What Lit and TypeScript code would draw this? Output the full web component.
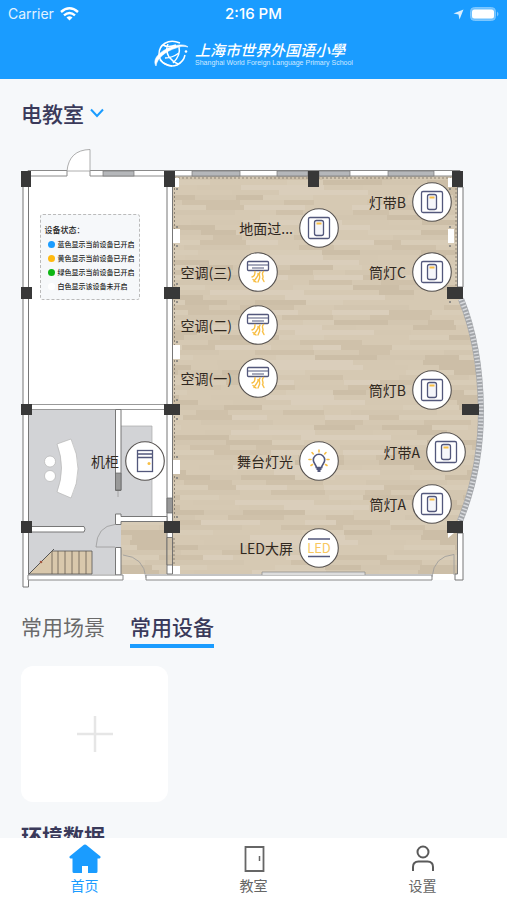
import { LitElement, html, svg, css } from "lit";
import { customElement, property, state } from "lit/decorators.js";
import { classMap } from "lit/directives/class-map.js";

type IconName = "switch" | "ac" | "bulb" | "led" | "cabinet";

interface Device {
  label: string;
  icon: IconName;
  x: number;
  y: number;
}

/* Plan drawing units: the visible area of the floor plan. */
const PLAN = { x: 21, y: 148, w: 465, h: 442 };

const DEVICES: Device[] = [
  { label: "灯带B", icon: "switch", x: 432, y: 202 },
  { label: "地面过...", icon: "switch", x: 319, y: 228 },
  { label: "空调(三)", icon: "ac", x: 258, y: 272 },
  { label: "筒灯C", icon: "switch", x: 432, y: 272 },
  { label: "空调(二)", icon: "ac", x: 258, y: 325 },
  { label: "空调(一)", icon: "ac", x: 258, y: 378 },
  { label: "筒灯B", icon: "switch", x: 432, y: 390 },
  { label: "灯带A", icon: "switch", x: 446, y: 452 },
  { label: "机柜", icon: "cabinet", x: 145, y: 461 },
  { label: "舞台灯光", icon: "bulb", x: 319, y: 461 },
  { label: "筒灯A", icon: "switch", x: 432, y: 504 },
  { label: "LED大屏", icon: "led", x: 319, y: 548 },
];

const LEGEND = [
  { tone: "blue", text: "蓝色显示当前设备已开启" },
  { tone: "amber", text: "黄色显示当前设备已开启" },
  { tone: "green", text: "绿色显示当前设备已开启" },
  { tone: "blank", text: "白色显示该设备未开启" },
];

const INK = "#53587c";
const GOLD = "#f8bf45";

const ICONS = {
  switch: svg`
    <rect x="9.5" y="9.5" width="21" height="21" rx="1.5" fill="none" stroke=${INK} stroke-width="1.3"/>
    <rect x="15.5" y="12.5" width="9" height="15" rx="2" fill="#f5f6fa" stroke=${INK} stroke-width="1.3"/>
    <path d="M17.5 15.5h5" stroke=${GOLD} stroke-width="2"/>`,
  ac: svg`
    <rect x="9.5" y="9.5" width="21" height="9" rx="1" fill="#fff" stroke=${INK} stroke-width="1.3"/>
    <path d="M9.5 13h21M14 16h12" stroke=${INK} stroke-width="1.1" fill="none"/>
    <path d="M17 19.5c0 4-1 4.5-3 5.5M20 21.500c1 3-3 5-4 8M22 20c-2 3 1 4.500-1 7.500l-1 2.500M25.500 19.500c-3 2.500 1 4.500-1 7l1.500 3M15 27.500l3 2.500" stroke=${GOLD} stroke-width="1.4" fill="none" stroke-linecap="round"/>`,
  bulb: svg`
    <path d="M17.3 26.5c0-3-3-4.2-3-7.5a5.7 5.7 0 0 1 11.4 0c0 3.3-3 4.5-3 7.5z" fill="#fff" stroke=${INK} stroke-width="1.6"/>
    <path d="M17.5 28h5M18.500 30h3" stroke=${INK} stroke-width="2"/>
    <path d="M20 9v2M13 11.500l1.300 1.500M27 11.500L25.700 13M10 18.500h2M28 18.500h2M12 24.500l1.500-1M28 24.500l-1.500-1" stroke=${GOLD} stroke-width="1.6" stroke-linecap="round"/>`,
  led: svg`
    <path d="M9 11h22M9 28.500h22" stroke=${INK} stroke-width="1.6"/>
    <text x="20" y="24.500" text-anchor="middle" class="led">LED</text>`,
  cabinet: svg`
    <rect x="12.5" y="9.5" width="15" height="21" fill="#fff" stroke=${INK} stroke-width="1.3"/>
    <path d="M12.5 13h15M12.5 16.500h15" stroke=${INK} stroke-width="1.3"/>
    <circle cx="24" cy="22.500" r="1.500" fill=${GOLD}/>`,
};

/* Staggered planks covering the wooden floor. */
const PLANK_TONES = ["#d6c9b3", "#cfc1aa", "#dacebb", "#d3c6b0", "#d8ccb7", "#ccbea7", "#d5c8b2"];
const PLANKS = Array.from({ length: 84 }, (_, row) => {
  const cells: { x: number; y: number; w: number; tone: string }[] = [];
  let x = -((row * 37) % 50);
  let i = 0;
  while (x < 500) {
    const w = 26 + ((row * 17 + i * 23) % 37);
    cells.push({ x, y: row * 5, w, tone: PLANK_TONES[(row * row + i * i * 2 + row * i * 3) % 7] });
    x += w;
    i++;
  }
  return cells;
}).flat();

const COLUMNS = [
  [21, 171, 10, 16], [164, 171, 11, 16], [308, 171, 11, 16], [452, 171, 11, 16],
  [21, 287, 11, 12], [164, 287, 16, 12], [447, 287, 16, 12],
  [21, 404, 11, 11], [164, 404, 16, 11], [462, 404, 17, 11],
  [21, 521, 11, 12], [164, 521, 16, 12], [447, 521, 16, 12],
];

const WINDOWS = [[103, 31], [192, 48], [277, 31], [319, 31], [388, 46]];
const STAIRS = [52, 58, 65, 72, 79, 86];

@customElement("device-pin")
export class DevicePin extends LitElement {
  @property() label = "";
  @property() icon: IconName = "switch";

  static styles = css`
    :host {
      display: block;
    }
    .pin {
      display: flex;
      align-items: center;
      gap: 6px;
      padding: 0;
      border: 0;
      background: none;
      color: #30281f;
      font: 14px/20px "Noto Sans CJK SC", sans-serif;
      white-space: nowrap;
      cursor: pointer;
    }
    .disc {
      width: 40px;
      height: 40px;
      display: block;
    }
    .led {
      font: 13px "Noto Sans CJK SC", sans-serif;
      fill: #f8c860;
    }
  `;

  render() {
    return html`<button class="pin" type="button">
      <span>${this.label}</span>
      <svg class="disc" viewBox="0 0 40 40" aria-hidden="true">
        <circle cx="20" cy="20" r="19.3" fill="#fff" stroke="#55514f" stroke-width="1.1" />
        ${ICONS[this.icon]}
      </svg>
    </button>`;
  }
}

@customElement("floor-plan")
export class FloorPlan extends LitElement {
  static styles = css`
    :host {
      display: block;
      position: relative;
    }
    .drawing {
      display: block;
      width: 100%;
      height: auto;
    }
    .pin {
      position: absolute;
      transform: translateY(-50%);
    }
    .legend {
      position: absolute;
      left: 4%;
      top: 15%;
      box-sizing: border-box;
      width: 100px;
      padding: 8px 4px 6px;
      border: 1px dashed #bbb;
      border-radius: 3px;
      background: #f6f8fa;
      color: #222;
      font: 500 7px/14px "Noto Sans CJK SC", sans-serif;
      white-space: nowrap;
    }
    .legend h3 {
      margin: 0;
      font-size: 8px;
      font-weight: 500;
      line-height: 14px;
    }
    .legend ul {
      margin: 0;
      padding: 0 0 0 3px;
      list-style: none;
    }
    .legend li {
      display: flex;
      align-items: center;
      gap: 3px;
    }
    .dot {
      width: 7px;
      height: 7px;
      border-radius: 50%;
    }
    .blue { background: #1a9cff; }
    .amber { background: #ffb90f; }
    .green { background: #0db614; }
    .blank { background: #fff; }
  `;

  private drawing() {
    return html`<svg class="drawing" viewBox="${PLAN.x} ${PLAN.y} ${PLAN.w} ${PLAN.h}" aria-hidden="true">
      <defs>
        <pattern id="wood" y="170" width="500" height="420" patternUnits="userSpaceOnUse">
          <rect width="500" height="420" fill="#d5c8b3" />
          ${PLANKS.map((p) => svg`<rect x=${p.x} y=${p.y} width=${p.w} height="5" fill=${p.tone}/>`)}
        </pattern>
      </defs>

      <!-- floors -->
      <path d="M23 171H463V299Q480 345 481 410Q481 470 463 521V580H23z" fill="#fff" />
      <path d="M173 176H457V290L461 299Q478 345 479 410Q479 470 458 521V574H173z" fill="url(#wood)" />
      <path d="M29 410H115V574H29zM115 473H121V547H115zM121 426H152V516H121z" fill="#d2d3d6" />
      <path d="M121 522H173V574H121z" fill="url(#wood)" />
      <path d="M121 426H152V516" fill="none" stroke="#aaa" stroke-width=".7" />

      <!-- outer and inner walls -->
      <g fill="#fff" stroke="#777" stroke-width="1">
        <path d="M23 176H28.5V587H23z" />
        <path d="M28 170.5H67V176H28zM90 170.5H460V176H90z" stroke="#8a8a8a" />
        <path d="M167 176H172.5V574H167z" />
        <path d="M457.5 187H463V287H457.5zM457.5 533H463V580H455V574H457.5z" />
        <path d="M29 404.5H167V409.5H29z" stroke="#999" />
        <path d="M115.5 409.5H121V490.5H115.5z" />
        <path d="M115.5 514H121V516.5H167V521.5H121V524.5H115.5z" />
        <path d="M30 526.5H84Q86 529 84 532H30z" />
        <path d="M115.5 547.5H121V575H115.5z" />
        <path d="M28 575H123V580H28zM146 575H432V580H146z" stroke="#888" />
      </g>
      <path d="M115.5 473H121V490H115.5zM167 498H172.5V513H167z" fill="#999" stroke="#666" stroke-width=".7" />
      <path d="M167 537.5H172.5V565H167z" fill="url(#wood)" stroke="#666" stroke-width=".8" />
      ${WINDOWS.map(([x, w]) => svg`<rect x=${x} y="171" width=${w} height="5" fill="#b5b7ba" stroke="#777" stroke-width=".7"/>`)}
      <path d="M174 178H451M456 188V286M174.5 188V520M174 538V566" stroke="#8d8375" stroke-width="1" stroke-dasharray="2 2" fill="none" />

      <!-- curved glass wall -->
      <path d="M461 299Q480 345 481 410Q481 470 460 521" fill="none" stroke="#a2a5a9" stroke-width="6" />
      <path d="M461 299Q480 345 481 410Q481 470 460 521" fill="none" stroke="#d8dadd" stroke-width="5" stroke-dasharray="1.5 2" />

      <!-- wall boxes -->
      <path d="M173 178h6v9h-6zM173 229h7v14h-7zM173 345h7v14h-7zM173 460h7v14h-7zM173 566h7v8h-7zM448 229h6v14h-6zM448 178h4v9h-4zM448 533h6l-6 5z" fill="#fff" />
      <g fill="#777">
        ${[189, 227, 246, 284, 302, 342, 361, 400, 419, 457, 478, 517].map((y) => svg`<circle cx="177" cy=${y} r="1"/>`)}
        ${[189, 227, 246, 302].map((y) => svg`<circle cx="450" cy=${y} r="1"/>`)}
      </g>
      <path d="M262 575V572H365V575" fill="#ddd" stroke="#888" stroke-width=".7" />

      <!-- doors -->
      <g fill="none" stroke="#999" stroke-width=".8">
        <path d="M67 171Q69 150 90 149.5V171z" fill="#fff" />
        <path d="M96 547Q97 526 115 524.5M96 547H115" />
        <path d="M123 555Q144 557 146 578M118 491V497" />
        <path d="M432 577Q434 556 454 554.5V575" />
      </g>

      <!-- reception desk and seats -->
      <g fill="#fff" stroke="#b5b5b5" stroke-width=".7">
        <path d="M57 444L71 439Q85 469 71 498L57 492Q66 468 57 444z" />
        <circle cx="50" cy="461.5" r="5.5" />
        <circle cx="50" cy="476" r="5.5" />
      </g>

      <!-- staircase -->
      <path d="M29 574L52 551H92V574z" fill="#d9c8ac" stroke="#555" stroke-width=".8" />
      <path d="M29 574L54 549" stroke="#555" />
      <circle cx="41" cy="562" r="1.3" fill="#a0573f" />
      ${STAIRS.map((x) => svg`<path d="M${x} 551V574" stroke="#665c50" stroke-width=".8"/>`)}

      ${COLUMNS.map(([x, y, w, h]) => svg`<rect x=${x} y=${y} width=${w} height=${h} fill="#383838"/>`)}
    </svg>`;
  }

  render() {
    return html`
      ${this.drawing()}
      <section class="legend">
        <h3>设备状态：</h3>
        <ul>
          ${LEGEND.map((l) => html`<li><span class="dot ${l.tone}"></span>${l.text}</li>`)}
        </ul>
      </section>
      ${DEVICES.map((d) => {
        const right = ((PLAN.x + PLAN.w - d.x - 20) / PLAN.w) * 100;
        const top = ((d.y - PLAN.y) / PLAN.h) * 100;
        return html`<device-pin
          class="pin"
          style="right:${right}%;top:${top}%"
          label=${d.label}
          icon=${d.icon}
        ></device-pin>`;
      })}
    `;
  }
}

@customElement("app-root")
export class AppRoot extends LitElement {
  @state() private tab = 1;

  static styles = css`
    :host {
      display: flex;
      flex-direction: column;
      height: 100vh;
      background: #f6f8fa;
      color: #3a3a5a;
      font-family: "Noto Sans CJK SC", sans-serif;
    }
    header {
      background: #1a9cff;
      color: #fff;
    }
    .status {
      display: grid;
      grid-template-columns: 1fr auto 1fr;
      align-items: center;
      height: 28px;
      padding: 0 8px;
      font: 14px/20px Inter, sans-serif;
    }
    .carrier,
    .power {
      display: flex;
      align-items: center;
      gap: 6px;
    }
    .carrier {
      color: #e2f2ff;
    }
    .power {
      justify-content: flex-end;
    }
    .time {
      font-size: 15px;
      font-weight: 500;
    }
    .brand {
      display: flex;
      justify-content: center;
      align-items: center;
      gap: 6px;
      height: 51px;
    }
    .brand-text {
      display: flex;
      flex-direction: column;
    }
    .brand-cn {
      font: italic 500 15px/18px "Noto Sans CJK SC", sans-serif;
    }
    .brand-en {
      color: #cfe9ff;
      font: 7px/8px "Liberation Sans", sans-serif;
    }
    svg {
      display: block;
    }
    main {
      flex: 1;
      min-height: 0;
      overflow: auto;
      scrollbar-width: none;
      padding: 19px 21px 0;
    }
    .room {
      display: inline-grid;
      align-items: center;
    }
    .room select,
    .room svg {
      grid-area: 1 / 1;
    }
    .room svg {
      justify-self: end;
      pointer-events: none;
    }
    .room select {
      appearance: none;
      margin: 0;
      padding: 0 20px 0 0;
      border: 0;
      background: none;
      color: inherit;
      font: 500 21px/30px "Noto Sans CJK SC", sans-serif;
    }
    floor-plan {
      margin-top: 20px;
    }
    .tabs {
      display: flex;
      gap: 25px;
      margin-top: 21px;
    }
    .tab {
      padding: 0 0 3px;
      border: 0;
      border-bottom: 4px solid transparent;
      background: none;
      color: #6a6a6a;
      font: 21px/30px "Noto Sans CJK SC", sans-serif;
      cursor: pointer;
    }
    .tab.active {
      border-color: #1a9cff;
      color: #3a3a5a;
      font-weight: 500;
    }
    .add {
      display: grid;
      place-items: center;
      width: 147px;
      height: 136px;
      margin-top: 18px;
      padding: 0;
      border: 0;
      border-radius: 12px;
      background: #fff;
      cursor: pointer;
    }
    h2 {
      margin: 18px 0 20px;
      font-size: 21px;
      font-weight: 700;
      line-height: 30px;
    }
    nav {
      display: grid;
      grid-template-columns: repeat(3, 1fr);
      height: 62px;
      background: #fff;
    }
    nav a {
      display: flex;
      flex-direction: column;
      align-items: center;
      gap: 1px;
      padding-top: 5px;
      color: #666;
      font-size: 14px;
      line-height: 20px;
      text-decoration: none;
    }
    nav a.current {
      color: #1a9cff;
    }
  `;

  render() {
    return html`
      <header>
        <div class="status">
          <span class="carrier">
            Carrier
            <svg width="19" height="14" viewBox="0 0 19 14" fill="none" stroke="#fff" stroke-width="2.4" aria-hidden="true">
              <path d="M1 5Q9.5-2.5 18 5M4 8.3Q9.5 3.5 15 8.3" />
              <path d="M6.5 10.5Q9.5 8 12.5 10.5L9.5 13.5z" fill="#fff" stroke="none" />
            </svg>
          </span>
          <span class="time">2:16 PM</span>
          <span class="power">
            <svg width="11" height="11" viewBox="0 0 11 11" aria-hidden="true"><path d="M10.5.5L6.5 10.5L5.5 5.5L.5 4.5z" fill="#d9efff" /></svg>
            <svg width="29" height="14" viewBox="0 0 29 14" aria-hidden="true">
              <rect x=".5" y=".5" width="25" height="13" rx="4" fill="#6dc0ff" stroke="#7cc7ff" />
              <rect x="2" y="2.5" width="22" height="9" rx="2.5" fill="#fff" />
              <path d="M27 4.5Q30 7 27 9.5z" fill="#7cc7ff" />
            </svg>
          </span>
        </div>
        <div class="brand">
          <svg width="35" height="28" viewBox="0 0 35 28" fill="none" stroke="#fff" aria-hidden="true">
            <path d="M26 3C14-2 5 5 5 14c0 9 10 14 18 11c4-2 7-5 8-10" stroke-width="1.5" />
            <path d="M2 26C-3 18 9 9 20 6c7-2 12-1 14 1c-4-1-8-1-12 1C12 11 3 18 2 26z" fill="#fff" stroke-width=".6" />
            <path d="M9 5q5 3 13 0M14 4q-3 6 1 13q4 5 9 7M25 7q2 8-6 16M11 18q7 0 14-5M6 20q5 5 12 6" stroke-width="1.5" />
            <circle cx="32" cy="11.5" r="1.3" fill="#fff" stroke="none" />
          </svg>
          <div class="brand-text">
            <span class="brand-cn">上海市世界外国语小學</span>
            <span class="brand-en">Shanghai World Foreign Language Primary School</span>
          </div>
        </div>
      </header>

      <main>
        <label class="room">
          <select aria-label="教室">
            <option>电教室</option>
          </select>
          <svg width="14" height="10" viewBox="0 0 14 10" aria-hidden="true">
            <path d="M1 1.5L7 8L13 1.5" fill="none" stroke="#1a9cff" stroke-width="2" />
          </svg>
        </label>

        <floor-plan></floor-plan>

        <div class="tabs" role="tablist">
          ${["常用场景", "常用设备"].map(
            (name, i) => html`<button
              type="button"
              role="tab"
              aria-selected=${this.tab === i}
              class=${classMap({ tab: true, active: this.tab === i })}
              @click=${() => (this.tab = i)}
            >${name}</button>`
          )}
        </div>

        <button class="add" type="button" aria-label="添加设备">
          <svg width="36" height="36" viewBox="0 0 36 36" aria-hidden="true">
            <path d="M18 0V36M0 18H36" stroke="#e6e6e6" stroke-width="2.5" />
          </svg>
        </button>

        <h2>环境数据</h2>
      </main>

      <nav>
        <a class="current" href="#home">
          <svg width="32" height="31" viewBox="0 0 32 31" aria-hidden="true">
            <path d="M16 1.500Q17 1.500 18 2.500L31.500 13.500Q32 15 30.500 15.500H28.500V28.500Q28.500 30 27 30H19V23H13V30H5Q3.500 30 3.500 28.500V15.500H1.500Q0 15 .5 13.500L14 2.500Q15 1.500 16 1.500z" fill="#1a9cff" />
          </svg>
          首页
        </a>
        <a href="#rooms">
          <svg width="32" height="31" viewBox="0 0 32 31" fill="none" stroke="#666" aria-hidden="true">
            <path d="M7.5 4H25.5V28H7.5z" stroke-width="1.8" />
            <path d="M21.5 13V18" stroke-width="1.5" />
          </svg>
          教室
        </a>
        <a href="#settings">
          <svg width="32" height="31" viewBox="0 0 32 31" fill="none" stroke="#5a5a5a" stroke-width="2" aria-hidden="true">
            <circle cx="16" cy="9" r="5.5" />
            <path d="M6 28V24Q6 18.5 11.5 18.5H20.5Q26 18.5 26 24V28" />
          </svg>
          设置
        </a>
      </nav>
    `;
  }
}
